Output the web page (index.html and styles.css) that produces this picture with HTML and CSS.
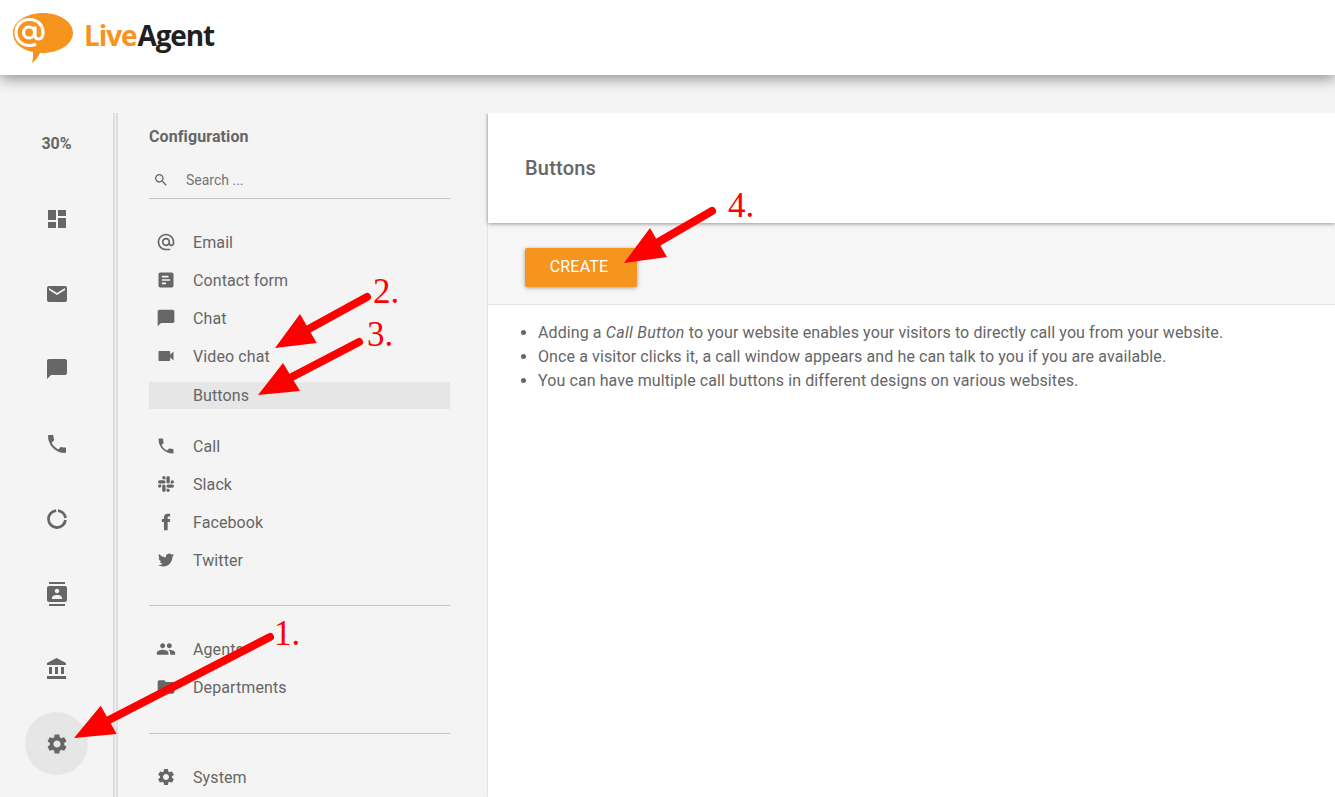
FILE: index.html
```html
<!DOCTYPE html>
<html lang="en">
<head>
<meta charset="utf-8">
<title>LiveAgent - Buttons</title>
<link rel="stylesheet" href="styles.css">
</head>
<body>
<svg class="sprite" xmlns="http://www.w3.org/2000/svg">
  <symbol id="i-dashboard" viewBox="0 0 24 24"><path d="M3 13h8V3H3v10zm0 8h8v-6H3v6zm10 0h8V11h-8v10zm0-18v6h8V3h-8z"/></symbol>
  <symbol id="i-mail" viewBox="0 0 24 24"><path d="M20 4H4c-1.1 0-1.99.9-1.99 2L2 18c0 1.1.9 2 2 2h16c1.1 0 2-.9 2-2V6c0-1.1-.9-2-2-2zm0 4l-8 5-8-5V6l8 5 8-5v2z"/></symbol>
  <symbol id="i-chat" viewBox="0 0 24 24"><path d="M20 2H4c-1.1 0-1.99.9-1.99 2L2 22l4-4h14c1.1 0 2-.9 2-2V4c0-1.1-.9-2-2-2z"/></symbol>
  <symbol id="i-phone" viewBox="0 0 24 24"><path d="M6.62 10.79c1.44 2.83 3.76 5.14 6.59 6.59l2.2-2.2c.27-.27.67-.36 1.02-.24 1.12.37 2.33.57 3.57.57.55 0 1 .45 1 1V20c0 .55-.45 1-1 1-9.39 0-17-7.61-17-17 0-.55.45-1 1-1h3.5c.55 0 1 .45 1 1 0 1.25.2 2.45.57 3.57.11.35.03.74-.25 1.02l-2.2 2.2z"/></symbol>
  <symbol id="i-donut" viewBox="0 0 24 24"><path fill="none" stroke="#666" stroke-width="2.800" d="M11.200 3.540A8.500 8.500 0 1 0 20.440 13M13 3.560A8.500 8.500 0 0 1 20.440 11"/></symbol>
  <symbol id="i-contacts" viewBox="0 0 24 24"><path d="M20 0H4v2h16V0zM4 24h16v-2H4v2zM20 4H4c-1.1 0-2 .9-2 2v12c0 1.1.9 2 2 2h16c1.1 0 2-.9 2-2V6c0-1.1-.9-2-2-2zm-8 2.75c1.24 0 2.25 1.01 2.25 2.25s-1.01 2.25-2.25 2.25S9.75 10.24 9.75 9 10.76 6.75 12 6.75zM17 17H7v-1.5c0-1.67 3.33-2.5 5-2.5s5 .83 5 2.5V17z"/></symbol>
  <symbol id="i-bank" viewBox="0 0 24 24"><path d="M4 10v7h3v-7H4zm6 0v7h3v-7h-3zM2 22h19v-3H2v3zm14-12v7h3v-7h-3zm-4.500-9L2 6v2h19V6l-9.500-5z"/></symbol>
  <symbol id="i-gear" viewBox="0 0 24 24"><path d="M19.14 12.94c.04-.3.06-.61.06-.94 0-.32-.02-.64-.07-.94l2.03-1.58c.18-.14.23-.41.12-.61l-1.92-3.32c-.12-.22-.37-.29-.59-.22l-2.39.96c-.5-.38-1.03-.7-1.62-.94l-.36-2.54c-.04-.24-.24-.41-.48-.41h-3.84c-.24 0-.43.17-.47.41l-.36 2.54c-.59.24-1.13.57-1.62.94l-2.39-.96c-.22-.08-.47 0-.59.22L2.74 8.87c-.12.21-.08.47.12.61l2.03 1.58c-.05.3-.09.63-.09.94s.02.64.07.94l-2.03 1.58c-.18.14-.23.41-.12.61l1.92 3.32c.12.22.37.29.59.22l2.39-.96c.5.38 1.03.7 1.62.94l.36 2.54c.05.24.24.41.48.41h3.84c.24 0 .44-.17.47-.41l.36-2.54c.59-.24 1.13-.56 1.62-.94l2.39.96c.22.08.47 0 .59-.22l1.92-3.32c.12-.22.07-.47-.12-.61l-2.01-1.58zM12 15.6c-1.98 0-3.6-1.62-3.6-3.6s1.62-3.6 3.6-3.6 3.6 1.62 3.6 3.6-1.62 3.6-3.6 3.6z"/></symbol>
  <symbol id="i-search" viewBox="0 0 24 24"><path d="M15.5 14h-.79l-.28-.27C15.41 12.59 16 11.11 16 9.5 16 5.91 13.09 3 9.5 3S3 5.91 3 9.5 5.91 16 9.5 16c1.61 0 3.09-.59 4.23-1.57l.27.28v.79l5 4.99L20.49 19l-4.99-5zm-6 0C7.01 14 5 11.99 5 9.5S7.01 5 9.5 5 14 7.01 14 9.5 11.99 14 9.5 14z"/></symbol>
  <symbol id="i-at" viewBox="0 0 24 24"><path d="M12 2C6.48 2 2 6.48 2 12s4.48 10 10 10h5v-2h-5c-4.34 0-8-3.66-8-8s3.66-8 8-8 8 3.66 8 8v1.43c0 .79-.71 1.57-1.5 1.57s-1.5-.78-1.5-1.57V12c0-2.76-2.24-5-5-5s-5 2.24-5 5 2.24 5 5 5c1.38 0 2.64-.56 3.54-1.47.65.89 1.77 1.47 2.96 1.47 1.97 0 3.5-1.6 3.5-3.57V12c0-5.52-4.48-10-10-10zm0 13c-1.66 0-3-1.34-3-3s1.34-3 3-3 3 1.34 3 3-1.34 3-3 3z"/></symbol>
  <symbol id="i-form" viewBox="0 0 24 24"><path d="M19 3H5c-1.1 0-2 .9-2 2v14c0 1.1.9 2 2 2h14c1.1 0 2-.9 2-2V5c0-1.1-.9-2-2-2zm-7 14H7v-2h5v2zm5-4H7v-2h10v2zm-2-4H7V7h8v2z"/></symbol>
  <symbol id="i-video" viewBox="0 0 24 24"><path d="M17 10.5V7c0-.55-.45-1-1-1H4c-.55 0-1 .45-1 1v10c0 .55.45 1 1 1h12c.55 0 1-.45 1-1v-3.5l4 4v-11l-4 4z"/></symbol>
  <symbol id="i-slack" viewBox="-3 -3 30 30"><path d="M5.042 15.165a2.528 2.528 0 0 1-2.52 2.523A2.528 2.528 0 0 1 0 15.165a2.527 2.527 0 0 1 2.522-2.52h2.52v2.52zM6.313 15.165a2.527 2.527 0 0 1 2.521-2.52 2.527 2.527 0 0 1 2.521 2.52v6.313A2.528 2.528 0 0 1 8.834 24a2.528 2.528 0 0 1-2.521-2.522v-6.313zM8.834 5.042a2.528 2.528 0 0 1-2.521-2.52A2.528 2.528 0 0 1 8.834 0a2.528 2.528 0 0 1 2.521 2.522v2.52H8.834zM8.834 6.313a2.528 2.528 0 0 1 2.521 2.521 2.528 2.528 0 0 1-2.521 2.521H2.522A2.528 2.528 0 0 1 0 8.834a2.528 2.528 0 0 1 2.522-2.521h6.312zM18.956 8.834a2.528 2.528 0 0 1 2.522-2.521A2.528 2.528 0 0 1 24 8.834a2.528 2.528 0 0 1-2.522 2.521h-2.522V8.834zM17.688 8.834a2.528 2.528 0 0 1-2.523 2.521 2.527 2.527 0 0 1-2.52-2.521V2.522A2.527 2.527 0 0 1 15.165 0a2.528 2.528 0 0 1 2.523 2.522v6.312zM15.165 18.956a2.528 2.528 0 0 1 2.523 2.522A2.528 2.528 0 0 1 15.165 24a2.527 2.527 0 0 1-2.52-2.522v-2.522h2.52zM15.165 17.688a2.527 2.527 0 0 1-2.52-2.523 2.526 2.526 0 0 1 2.52-2.52h6.313A2.527 2.527 0 0 1 24 15.165a2.528 2.528 0 0 1-2.522 2.523h-6.313z"/></symbol>
  <symbol id="i-facebook" viewBox="0 0 24 24"><path d="M14 8.5V6.500c0-.8.5-1 1-1h2V2h-3c-3 0-4.500 2-4.500 4.500v2H7V12h2.500v10H14V12h2.600l.4-3.500z"/></symbol>
  <symbol id="i-twitter" viewBox="-3 -3 30 30"><path d="M23.953 4.570a10 10 0 0 1-2.825.775 4.958 4.958 0 0 0 2.163-2.723c-.951.555-2.005.959-3.127 1.184a4.920 4.920 0 0 0-8.384 4.482C7.690 8.095 4.067 6.130 1.640 3.162a4.822 4.822 0 0 0-.666 2.475c0 1.710.870 3.213 2.188 4.096a4.904 4.904 0 0 1-2.228-.616v.060a4.923 4.923 0 0 0 3.946 4.827 4.996 4.996 0 0 1-2.212.085 4.936 4.936 0 0 0 4.604 3.417 9.867 9.867 0 0 1-6.102 2.105c-.390 0-.779-.023-1.170-.067a13.995 13.995 0 0 0 7.557 2.209c9.053 0 13.998-7.496 13.998-13.985 0-.210 0-.420-.015-.630A9.935 9.935 0 0 0 24 4.590z"/></symbol>
  <symbol id="i-people" viewBox="0 0 24 24"><path d="M16 11c1.660 0 2.990-1.340 2.990-3S17.660 5 16 5c-1.660 0-3 1.340-3 3s1.340 3 3 3zm-8 0c1.660 0 2.990-1.340 2.990-3S9.660 5 8 5C6.340 5 5 6.340 5 8s1.340 3 3 3zm0 2c-2.330 0-7 1.170-7 3.500V19h14v-2.500c0-2.330-4.670-3.500-7-3.500zm8 0c-.290 0-.620.020-.970.050 1.160.840 1.970 1.970 1.970 3.450V19h6v-2.500c0-2.330-4.670-3.500-7-3.500z"/></symbol>
  <symbol id="i-folder" viewBox="0 0 24 24"><path d="M10 4H4c-1.100 0-1.990.9-1.990 2L2 18c0 1.100.9 2 2 2h16c1.100 0 2-.9 2-2V8c0-1.100-.9-2-2-2h-8l-2-2z"/></symbol>
</svg>

<header class="topbar">
  <svg class="logo-mark" viewBox="0 0 62 52" width="62" height="52">
    <path class="logo-bubble" d="M31 1C48 1 61 10 61 21S47 41 31 41c-1 0-2 0-3 0-2 4-5 8-8 10 1-3 1-7 1-11C9 38 1 30 1 21 1 10 14 1 31 1z"/>
    <circle class="logo-at" cx="17" cy="20.500" r="5.500"/>
    <path class="logo-at" d="M23 14.500v9c0 2 1.500 3.500 3.500 3.500 3 0 4.500-3 4.500-6.500C31 12.500 25 7.500 17.500 7.500 10 7.500 4 13 4 20.500S10 33.500 17.500 33.500c2.500 0 4.500-.5 6.500-1.500"/>
  </svg>
  <div class="logo-text"><span class="logo-live">Live</span><span class="logo-agent">Agent</span></div>
</header>

<main class="shell">
  <nav class="rail">
    <div class="rail-percent">30%</div>
    <div class="rail-item"><svg class="icon"><use href="#i-dashboard"/></svg></div>
    <div class="rail-item"><svg class="icon"><use href="#i-mail"/></svg></div>
    <div class="rail-item"><svg class="icon"><use href="#i-chat"/></svg></div>
    <div class="rail-item"><svg class="icon"><use href="#i-phone"/></svg></div>
    <div class="rail-item"><svg class="icon"><use href="#i-donut"/></svg></div>
    <div class="rail-item"><svg class="icon"><use href="#i-contacts"/></svg></div>
    <div class="rail-item"><svg class="icon"><use href="#i-bank"/></svg></div>
    <div class="rail-item"><span class="rail-active"><svg class="icon"><use href="#i-gear"/></svg></span></div>
  </nav>

  <aside class="sidebar">
    <h2 class="side-title">Configuration</h2>
    <div class="search">
      <svg class="search-icon"><use href="#i-search"/></svg>
      <span class="search-text">Search ...</span>
    </div>

    <ul class="menu menu-first">
      <li class="menu-item"><svg class="menu-icon"><use href="#i-at"/></svg>Email</li>
      <li class="menu-item"><svg class="menu-icon"><use href="#i-form"/></svg>Contact form</li>
      <li class="menu-item"><svg class="menu-icon"><use href="#i-chat"/></svg>Chat</li>
      <li class="menu-item"><svg class="menu-icon"><use href="#i-video"/></svg>Video chat</li>
      <li class="menu-sub">Buttons</li>
    </ul>
    <ul class="menu menu-second">
      <li class="menu-item"><svg class="menu-icon"><use href="#i-phone"/></svg>Call</li>
      <li class="menu-item"><svg class="menu-icon"><use href="#i-slack"/></svg>Slack</li>
      <li class="menu-item"><svg class="menu-icon"><use href="#i-facebook"/></svg>Facebook</li>
      <li class="menu-item"><svg class="menu-icon"><use href="#i-twitter"/></svg>Twitter</li>
    </ul>
    <hr class="side-rule rule-one">
    <ul class="menu">
      <li class="menu-item"><svg class="menu-icon"><use href="#i-people"/></svg>Agents</li>
      <li class="menu-item"><svg class="menu-icon"><use href="#i-folder"/></svg>Departments</li>
    </ul>
    <hr class="side-rule rule-two">
    <ul class="menu">
      <li class="menu-item"><svg class="menu-icon"><use href="#i-gear"/></svg>System</li>
    </ul>
  </aside>

  <section class="content">
    <div class="content-head"><h1 class="content-title">Buttons</h1></div>
    <div class="toolbar"><button class="create-btn" type="button">CREATE</button></div>
    <ul class="notes">
      <li>Adding a <em class="notes-em">Call Button</em> to your website enables your visitors to directly call you from your website.</li>
      <li>Once a visitor clicks it, a call window appears and he can talk to you if you are available.</li>
      <li>You can have multiple call buttons in different designs on various websites.</li>
    </ul>
  </section>
</main>

<svg class="annotations" viewBox="0 0 1335 797" width="1335" height="797">
  <g class="arrow">
    <line x1="270" y1="637" x2="105" y2="722"/>
    <polygon points="74,738 100.700,705.700 116.700,734"/>
    <line x1="367" y1="297" x2="305" y2="331"/>
    <polygon points="275,348 300,314 316.700,343"/>
    <line x1="359" y1="342" x2="288" y2="379"/>
    <polygon points="258,395 283,363 300,391"/>
    <line x1="712" y1="211" x2="655" y2="244"/>
    <polygon points="624,263 650,228 667,257"/>
  </g>
  <text class="step" x="274" y="645">1.</text>
  <text class="step" x="373" y="303">2.</text>
  <text class="step" x="367" y="346">3.</text>
  <text class="step" x="728" y="217">4.</text>
</svg>
</body>
</html>
```
FILE: styles.css
```css
* { box-sizing: border-box; }
html, body { margin: 0; height: 797px; overflow: hidden; }
body {
  position: relative;
  background: #f4f4f4;
  color: #666;
  font-family: Roboto, "Liberation Sans", sans-serif;
  font-size: 16px;
  display: flex;
  flex-direction: column;
}
.sprite { display: none; }

.topbar {
  flex: none;
  height: 75px;
  background: #fff;
  box-shadow: 0 3px 14px rgba(0, 0, 0, .45);
  display: flex;
  align-items: center;
  padding-left: 12px;
  position: relative;
  z-index: 2;
}
.logo-mark { flex: none; margin-top: 1px; }
.logo-bubble { fill: #f7941e; }
.logo-at { fill: none; stroke: #fff; stroke-width: 3.200; }
.logo-text {
  margin: -5px 0 0 10px;
  font-family: "Open Sans", sans-serif;
  font-size: 28px;
  font-weight: 700;
  letter-spacing: -1.100px;
  line-height: 1;
}
.logo-live { color: #f7941e; }
.logo-agent { color: #231f20; margin-left: 1px; }

.shell {
  flex: none;
  margin-top: 38px;
  height: 684px;
  display: flex;
  overflow: hidden;
}

.rail {
  flex: none;
  width: 115px;
  border-right: 2px solid #ddd;
  display: flex;
  flex-direction: column;
  align-items: stretch;
}
.rail-percent {
  height: 60px;
  margin-bottom: 8px;
  display: flex;
  align-items: center;
  justify-content: center;
  font-size: 16px;
  font-weight: 700;
  color: #666;
}
.rail-item {
  flex: none;
  height: 75px;
  display: flex;
  align-items: center;
  justify-content: center;
}
.rail-active {
  width: 63px;
  height: 63px;
  border-radius: 50%;
  background: #e6e6e6;
  display: flex;
  align-items: center;
  justify-content: center;
}
.icon { width: 24px; height: 24px; fill: #666; }

.sidebar {
  flex: none;
  width: 372px;
  margin-left: 1px;
  border-left: 2px solid #ddd;
  padding: 12px 38px 0 31px;
  letter-spacing: .1px;
}
.side-title {
  margin: 0;
  font-size: 16px;
  line-height: 24px;
  font-weight: 700;
  color: #666;
}
.search {
  margin-top: 14px;
  height: 36px;
  border-bottom: 1px solid #c4c4c4;
  display: flex;
  align-items: center;
  padding: 0 0 2px 4px;
}
.search-icon { width: 16px; height: 16px; fill: #666; flex: none; }
.search-text { margin-left: 17px; font-size: 14px; color: #757575; letter-spacing: 0; }

.menu { list-style: none; margin: 0; padding: 0; }
.menu-first { margin-top: 24px; }
.menu-second { margin-top: 18px; }
.menu-item {
  height: 38px;
  display: flex;
  align-items: center;
  color: #666;
}
.menu-icon { width: 20px; height: 20px; fill: #666; flex: none; margin: 0 17px 0 7px; }
.menu-sub {
  margin-top: 7px;
  height: 27px;
  padding-left: 44px;
  display: flex;
  align-items: center;
  background: #e6e6e6;
}
.side-rule { border: 0; height: 1px; background: #c4c4c4; margin: 0; }
.rule-one { margin-top: 26px; margin-bottom: 24px; }
.rule-two { margin-top: 27px; margin-bottom: 24px; }

.content {
  flex: 1;
  background: #fff;
  box-shadow: 0 0 2px rgba(0, 0, 0, .2);
  display: flex;
  flex-direction: column;
}
.content-head {
  flex: none;
  height: 110px;
  background: #fff;
  display: flex;
  align-items: center;
  padding-left: 37px;
  box-shadow: 0 1px 4px rgba(0, 0, 0, .4);
  position: relative;
}
.content-title { margin: 0; font-size: 20px; font-weight: 500; color: #666; letter-spacing: .2px; }
.toolbar {
  flex: none;
  height: 82px;
  background: #f6f6f6;
  border-bottom: 1px solid #e2e2e2;
  padding: 25px 0 0 37px;
}
.create-btn {
  display: block;
  width: 112px;
  height: 39px;
  border: 0;
  border-radius: 2px;
  background: #f7941e;
  color: #fff;
  font-family: inherit;
  font-size: 16px;
  font-weight: 400;
  letter-spacing: .2px;
  padding: 0 4px 2px 0;
  box-shadow: 0 1px 4px rgba(0, 0, 0, .35);
}
.notes {
  margin: 16px 0 0;
  padding: 0 0 0 50px;
  line-height: 24px;
  color: #666;
  letter-spacing: .1px;
}
.notes-em { letter-spacing: .3px; }

.annotations { position: absolute; left: 0; top: 0; z-index: 5; }
.arrow line { stroke: #f00; stroke-width: 8; stroke-linecap: round; }
.arrow polygon { fill: #f00; }
.step { fill: #f00; font-family: "Liberation Serif", serif; font-size: 35px; }
```
